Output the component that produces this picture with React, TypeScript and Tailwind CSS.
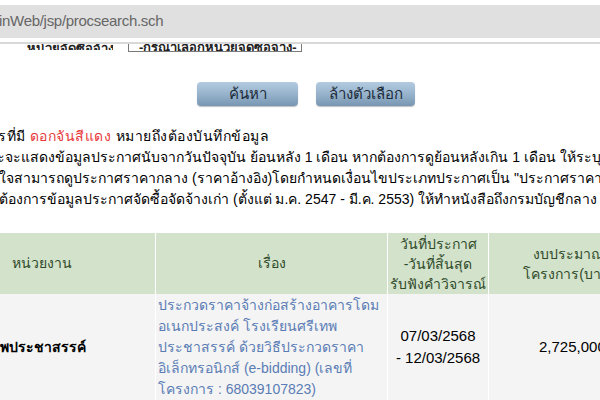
export default function App() {
  const font = { fontFamily: 'Tahoma, "Liberation Sans", "DejaVu Sans", sans-serif' };
  return (
    <div className="w-[600px] h-[400px] overflow-hidden bg-white flex flex-col" style={font}>
      {/* address bar */}
      <div className="h-[5px] bg-white" />
      <div className="h-[33px] bg-[#e0e0e0] flex items-center overflow-hidden">
        <span
          className="ml-[-1px] text-[15px] tracking-[-0.3px] text-[#666666] whitespace-nowrap"
          style={{ fontFamily: '"Liberation Sans", Arial, sans-serif' }}
        >
          inWeb/jsp/procsearch.sch
        </span>
      </div>
      <div className="h-[4px] bg-white" />
      <div className="h-[2px] bg-[#d8d8d8]" />

      {/* cut-off form row */}
      <div className="h-[8px] flex overflow-hidden items-start">
        <div className="ml-[27px] w-[86px] h-[6px] overflow-hidden relative">
          <span className="absolute bottom-[-5px] left-0 text-[13px] leading-[13px] font-bold text-[#222] whitespace-nowrap">
            หน่วยจัดซื้อจ้าง :
          </span>
        </div>
        <div className="ml-[15px] w-[174px] h-[8px] border-x border-b border-[#7a7a7a] overflow-hidden relative">
          <span className="absolute bottom-[-3px] left-[10px] text-[13px] leading-[13px] font-bold text-[#222] whitespace-nowrap">
            -กรุณาเลือกหน่วยจัดซื้อจ้าง-
          </span>
        </div>
      </div>

      {/* buttons */}
      <div className="mt-[30px] flex gap-[18px] pl-[197px]">
        <button className="w-[101px] h-[24px] rounded-[4px] bg-gradient-to-b from-[#b3cbe0] via-[#97b3cc] to-[#7896b2] text-[15px] text-[#1c2b3a] shadow-[0_1px_1px_rgba(0,0,0,0.25)]">
          ค้นหา
        </button>
        <button className="w-[99px] h-[24px] rounded-[4px] bg-gradient-to-b from-[#b3cbe0] via-[#97b3cc] to-[#7896b2] text-[15px] text-[#1c2b3a] shadow-[0_1px_1px_rgba(0,0,0,0.25)]">
          ล้างตัวเลือก
        </button>
      </div>

      {/* notes */}
      <div className="mt-[20px] flex flex-col text-[14px] leading-[21px] text-black whitespace-nowrap overflow-hidden">
        <div className="ml-[-2px] tracking-[0.5px]">
          รที่มี <span className="text-[#e8383a]">ดอกจันสีแดง</span> หมายถึงต้องบันทึกข้อมูล
        </div>
        <div className="ml-[-3px]">
          ะจะแสดงข้อมูลประกาศนับจากวันปัจจุบัน ย้อนหลัง 1 เดือน หากต้องการดูย้อนหลังเกิน 1 เดือน ให้ระบุวันที่ประกาศ
        </div>
        <div className="ml-[-1px]">
          ใจสามารถดูประกาศราคากลาง (ราคาอ้างอิง)โดยกำหนดเงื่อนไขประเภทประกาศเป็น "ประกาศราคากลาง" ที่
        </div>
        <div className="ml-[-1px]">
          ต้องการข้อมูลประกาศจัดซื้อจัดจ้างเก่า (ตั้งแต่ ม.ค. 2547 - มี.ค. 2553) ให้ทำหนังสือถึงกรมบัญชีกลาง
        </div>
      </div>

      {/* table */}
      <div className="mt-[23px] grid grid-cols-[155px_231px_100px_160px] gap-x-px w-[648px] text-[14px]">
        <div className="h-[61px] bg-[#d3e2cb] flex items-center pl-[12px] text-[#2e4a2a]">หน่วยงาน</div>
        <div className="h-[61px] bg-[#d3e2cb] flex items-center justify-center text-[#2e4a2a]">เรื่อง</div>
        <div className="h-[61px] bg-[#d3e2cb] flex items-center justify-center text-center leading-[20px] text-[#2e4a2a]">
          วันที่ประกาศ<br />-วันที่สิ้นสุด<br />รับฟังคำวิจารณ์
        </div>
        <div className="h-[61px] bg-[#d3e2cb] flex items-center justify-center text-center leading-[20px] text-[#2e4a2a]">
          งบประมาณ<br />โครงการ(บาท)
        </div>

        <div className="h-[106px] bg-[#f4f4f4] flex items-center font-bold text-black">พประชาสรรค์</div>
        <div className="h-[106px] bg-[#f4f4f4] flex items-center pl-[2px] leading-[21px] text-[#5a7cb5]">
          <div>
            ประกวดราคาจ้างก่อสร้างอาคารโดม<br />
            อเนกประสงค์ โรงเรียนศรีเทพ<br />
            ประชาสรรค์ ด้วยวิธีประกวดราคา<br />
            อิเล็กทรอนิกส์ (e-bidding) (เลขที่<br />
            โครงการ : 68039107823)
          </div>
        </div>
        <div className="h-[106px] bg-[#f4f4f4] flex items-center justify-center text-center text-[15px] leading-[22px] text-black">
          07/03/2568<br />- 12/03/2568
        </div>
        <div className="h-[106px] bg-[#f4f4f4] flex items-center pl-[50px] text-[15px] text-black whitespace-nowrap">
          2,725,000.00
        </div>
      </div>
    </div>
  );
}
